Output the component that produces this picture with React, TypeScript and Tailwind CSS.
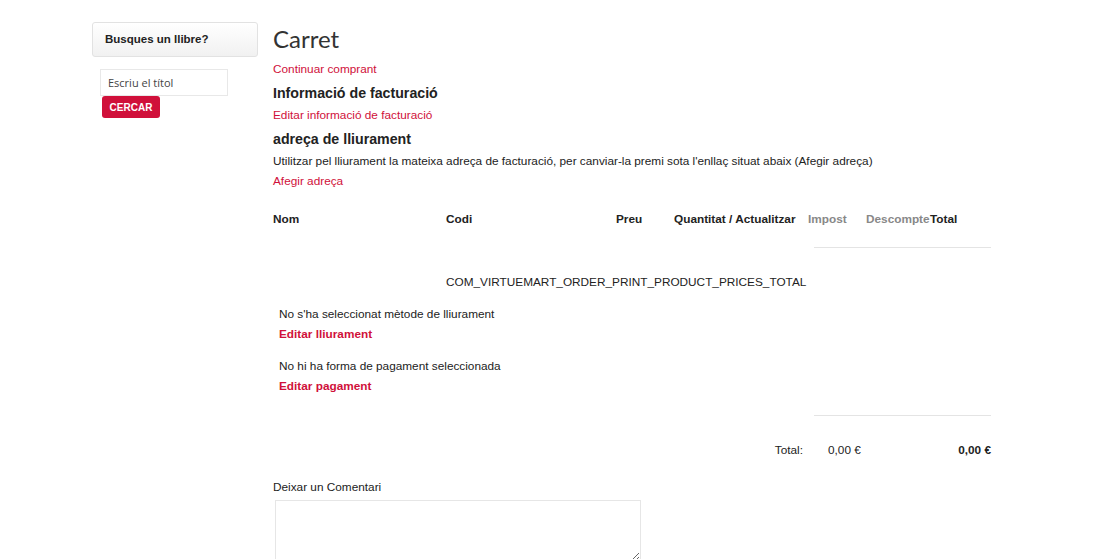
const red = "text-[#d0103a]";

const Sidebar = () => {
  return (
    <aside className="w-[166px] shrink-0">
      <div className="h-[35px] rounded-[3px] border border-[#e2e2e2] bg-gradient-to-b from-white to-[#f1f1f1] pl-[12px] text-[11.5px] font-bold leading-[33px] text-[#222]">
        Busques un llibre?
      </div>
      <div className="mt-[12px] ml-[8px] flex flex-col">
        <input
          type="text"
          placeholder="Escriu el títol"
          className="h-[27px] w-[128px] border border-[#e8e8e8] bg-white pl-[7px] font-['Open_Sans'] text-[11px] text-[#444] placeholder:text-[#444] focus:outline-none"
        />
        <button className="ml-[2px] h-[22px] w-[58px] rounded-[3px] bg-[#d0103a] text-[10px] font-bold text-white">
          CERCAR
        </button>
      </div>
    </aside>
  );
};

const Line = () => <div className="ml-auto h-px w-[177px] bg-[#e4e4e4]" />;

const Cart = () => {
  return (
    <main className="flex-1 text-[11.8px] text-[#222]">
      <h1 className="h-[36px] font-['Lato'] text-[24px] leading-[34px] text-[#333]">Carret</h1>
      <a className={`mt-[2px] block h-[18px] leading-[19px] ${red}`}>Continuar comprant</a>
      <h2 className="mt-[5px] h-[20px] text-[14.2px] font-bold leading-[21px]">Informació de facturació</h2>
      <a className={`mt-[3px] block h-[18px] leading-[19px] ${red}`}>Editar informació de facturació</a>
      <h2 className="mt-[5px] h-[20px] text-[14.2px] font-bold leading-[21px]">adreça de lliurament</h2>
      <p className="mt-[3px] h-[18px] leading-[19px]">
        Utilitzar pel lliurament la mateixa adreça de facturació, per canviar-la premi sota l'enllaç situat abaix (Afegir adreça)
      </p>
      <a className={`mt-[2px] block h-[18px] leading-[19px] ${red}`}>Afegir adreça</a>

      <div className="w-[718px]">
        <div className="mt-[20px] flex h-[18px] font-bold leading-[19px]">
          <div className="w-[173px]">Nom</div>
          <div className="w-[170px]">Codi</div>
          <div className="w-[58px]">Preu</div>
          <div className="w-[134px]">Quantitat / Actualitzar</div>
          <div className="w-[58px] text-[#888]">Impost</div>
          <div className="w-[64px] text-[#888]">Descompte</div>
          <div className="w-[61px]">Total</div>
        </div>
        <div className="mt-[19px]">
          <Line />
        </div>
        <div className="mt-[25px] h-[18px] pl-[173px] leading-[19px]">
          COM_VIRTUEMART_ORDER_PRINT_PRODUCT_PRICES_TOTAL
        </div>
        <div className="pl-[6px]">
          <p className="mt-[14px] h-[18px] leading-[19px]">No s'ha seleccionat mètode de lliurament</p>
          <a className={`mt-[2px] block h-[18px] font-bold leading-[19px] ${red}`}>Editar lliurament</a>
          <p className="mt-[14px] h-[18px] leading-[19px]">No hi ha forma de pagament seleccionada</p>
          <a className={`mt-[2px] block h-[18px] font-bold leading-[19px] ${red}`}>Editar pagament</a>
        </div>
        <div className="mt-[20px]">
          <Line />
        </div>
        <div className="mt-[25px] flex h-[18px] leading-[19px]">
          <div className="flex-1 text-right">Total:</div>
          <div className="flex w-[188px] justify-between pl-[25px]">
            <span>0,00 €</span>
            <span className="font-bold">0,00 €</span>
          </div>
        </div>
      </div>

      <p className="mt-[19px] h-[18px] leading-[19px]">Deixar un Comentari</p>
      <textarea className="mt-[4px] ml-[2px] block h-[62px] w-[366px] border border-[#e6e6e6] focus:outline-none" />
    </main>
  );
};

export default function App() {
  return (
    <div className="min-h-[559px] bg-white font-['Liberation_Sans',Arial,sans-serif]">
      <div className="mx-auto flex w-[916px] gap-[15px] pt-[22px]">
        <Sidebar />
        <Cart />
      </div>
    </div>
  );
}
